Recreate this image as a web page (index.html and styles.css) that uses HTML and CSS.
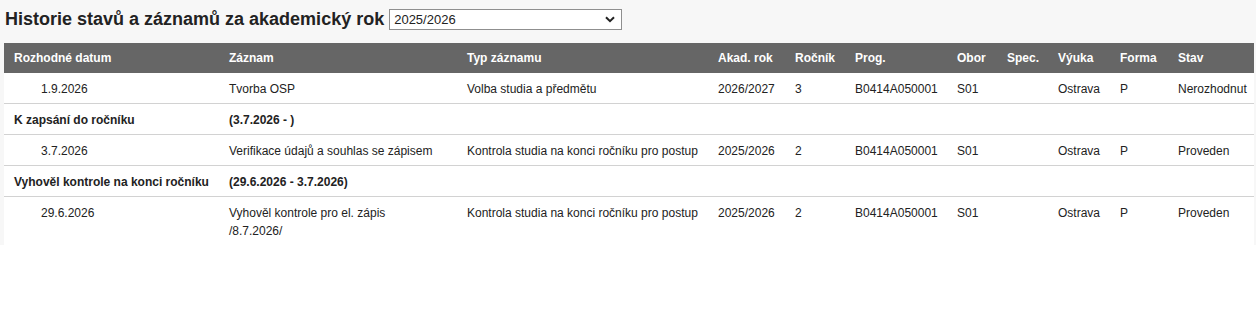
FILE: index.html
```html
<!DOCTYPE html>
<html lang="cs">
<head>
<meta charset="utf-8">
<title>Historie stavů</title>
<link rel="stylesheet" href="styles.css">
</head>
<body>
<div class="panel">
  <div class="title-row">
    <h2 class="title">Historie stavů a záznamů za akademický rok</h2>
    <div class="select-wrap">
      <select class="year"><option>2025/2026</option></select>
      <svg class="chev" width="10" height="7" viewBox="0 0 10 7"><path d="M1 1.2 L5 5.2 L9 1.2" fill="none" stroke="#222" stroke-width="2"/></svg>
    </div>
  </div>
  <table class="grid">
    <colgroup>
      <col class="c1"><col class="c2"><col class="c3"><col class="c4"><col class="c5"><col class="c6"><col class="c7"><col class="c8"><col class="c9"><col class="c10"><col class="c11">
    </colgroup>
    <thead>
      <tr><th>Rozhodné datum</th><th>Záznam</th><th>Typ záznamu</th><th>Akad. rok</th><th>Ročník</th><th>Prog.</th><th>Obor</th><th>Spec.</th><th>Výuka</th><th>Forma</th><th>Stav</th></tr>
    </thead>
    <tbody>
      <tr><td class="date">1.9.2026</td><td>Tvorba OSP</td><td>Volba studia a předmětu</td><td>2026/2027</td><td>3</td><td>B0414A050001</td><td>S01</td><td></td><td>Ostrava</td><td>P</td><td>Nerozhodnut</td></tr>
      <tr class="group"><td>K zapsání do ročníku</td><td colspan="10">(3.7.2026 - )</td></tr>
      <tr><td class="date">3.7.2026</td><td>Verifikace údajů a souhlas se zápisem</td><td>Kontrola studia na konci ročníku pro postup</td><td>2025/2026</td><td>2</td><td>B0414A050001</td><td>S01</td><td></td><td>Ostrava</td><td>P</td><td>Proveden</td></tr>
      <tr class="group"><td>Vyhověl kontrole na konci ročníku</td><td colspan="10">(29.6.2026 - 3.7.2026)</td></tr>
      <tr class="last"><td class="date">29.6.2026</td><td>Vyhověl kontrole pro el. zápis<br>/8.7.2026/</td><td>Kontrola studia na konci ročníku pro postup</td><td>2025/2026</td><td>2</td><td>B0414A050001</td><td>S01</td><td></td><td>Ostrava</td><td>P</td><td>Proveden</td></tr>
    </tbody>
  </table>
</div>
</body>
</html>
```
FILE: styles.css
```css
html, body {
  margin: 0;
  padding: 0;
  background: #ffffff;
  font-family: "Liberation Sans", Arial, sans-serif;
  color: #222;
}
.panel {
  background: #f7f7f7;
  padding: 0 2px 0 4px;
}
.title-row {
  display: flex;
  align-items: center;
  height: 43px;
  padding-left: 1px;
  box-sizing: border-box;
  padding-bottom: 5px;
}
.title {
  margin: 0;
  font-size: 18px;
  font-weight: bold;
  color: #222;
  line-height: 22px;
}
.select-wrap {
  position: relative;
  margin-left: 5px;
  width: 233px;
  height: 21px;
}
.year {
  appearance: none;
  -webkit-appearance: none;
  width: 100%;
  height: 100%;
  margin: 0;
  border: 1px solid #8f8f8f;
  border-radius: 0;
  background: #fff;
  font-family: "Liberation Sans", Arial, sans-serif;
  font-size: 13px;
  color: #222;
  padding: 0 0 0 4px;
}
.chev {
  position: absolute;
  right: 7px;
  top: 7px;
}
.grid {
  width: 100%;
  border-collapse: collapse;
  table-layout: fixed;
  background: #fff;
  font-size: 12px;
}
.c1 { width: 215px; }
.c2 { width: 238px; }
.c3 { width: 251px; }
.c4 { width: 77px; }
.c5 { width: 60px; }
.c6 { width: 102px; }
.c7 { width: 50px; }
.c8 { width: 51px; }
.c9 { width: 62px; }
.c10 { width: 58px; }
.c11 { width: auto; }
.grid th {
  background: #666;
  color: #fff;
  font-weight: bold;
  text-align: left;
  padding: 6px 10px;
  line-height: 18px;
  white-space: nowrap;
}
.grid td {
  padding: 7px 10px 5px;
  line-height: 18px;
  vertical-align: top;
  color: #222;
  border-bottom: 1px solid #d2d2d2;
  white-space: nowrap;
}
.grid td.date {
  padding-left: 37px;
}
.grid tr.group td {
  font-weight: bold;
}
.grid tr.last td {
  border-bottom: none;
}
```
